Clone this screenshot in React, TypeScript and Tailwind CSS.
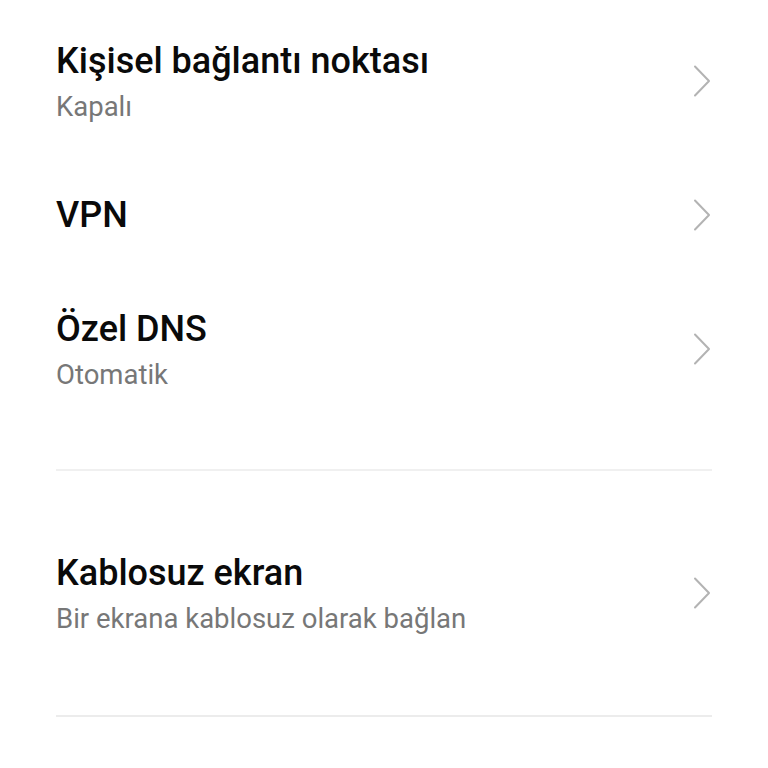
type Item = { title: string; subtitle?: string };

const section1: Item[] = [
  { title: "Kişisel bağlantı noktası", subtitle: "Kapalı" },
  { title: "VPN" },
  { title: "Özel DNS", subtitle: "Otomatik" },
];

function Chevron() {
  return (
    <svg width="18" height="32" viewBox="0 0 18 32" fill="none" className="shrink-0">
      <path d="M2 1.5 L16 16 L2 30.5" stroke="#b3b3b3" strokeWidth="2" strokeLinecap="round" strokeLinejoin="round" />
    </svg>
  );
}

function Row({ item, height }: { item: Item; height: string }) {
  return (
    <div className={`flex items-center justify-between pl-[56px] pr-[57px] ${height}`}>
      <div className={`flex flex-col ${item.subtitle ? "pt-[6px]" : ""}`}>
        <span className="text-[36px] font-medium leading-[40px] text-[#0a0a0a]">{item.title}</span>
        {item.subtitle && (
          <span className="mt-[6px] text-[27.5px] leading-[40px] text-[#777777]">{item.subtitle}</span>
        )}
      </div>
      <Chevron />
    </div>
  );
}

export default function App() {
  return (
    <div className="h-[768px] w-[768px] overflow-hidden bg-white pt-[14px]" style={{ fontFamily: "Roboto, 'Noto Sans', sans-serif" }}>
      {section1.map((it) => (
        <Row key={it.title} item={it} height="h-[134px]" />
      ))}
      <div className="mx-[56px] mt-[53px] h-[2px] bg-[#f0f0f0]" />
      <Row item={{ title: "Kablosuz ekran", subtitle: "Bir ekrana kablosuz olarak bağlan" }} height="h-[244px]" />
      <div className="mx-[56px] h-[2px] bg-[#ececec]" />
    </div>
  );
}
